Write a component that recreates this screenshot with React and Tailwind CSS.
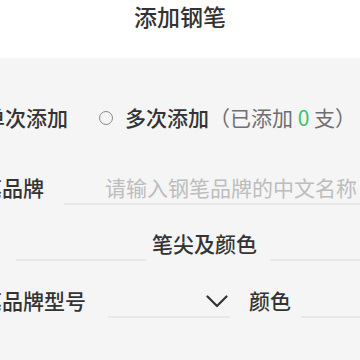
const font = { fontFamily: '"Noto Sans CJK SC", "Noto Sans", sans-serif' };

export default function App() {
  return (
    <div className="w-[360px] h-[360px] overflow-hidden bg-[#f5f5f5] text-[#333]" style={font}>
      {/* Header */}
      <div className="h-[58px] bg-white flex justify-center">
        <span className="text-[23px] leading-[33px] font-medium text-[#333]">添加钢笔</span>
      </div>

      {/* Add mode */}
      <div className="mt-[40px] h-[40px] flex items-center ml-[-16px] whitespace-nowrap text-[21px]">
        <span className="font-medium">单次添加</span>
        <span className="ml-[31px] w-[14px] h-[14px] rounded-full border-[1.5px] border-[#8a8a8a] shrink-0" />
        <span className="ml-[12px] font-medium">多次添加</span>
        <span className="text-[#6f6f6f]">（已添加 <span className="text-[#3cc36a]">0</span> 支）</span>
      </div>

      {/* Brand */}
      <div className="mt-[33px] flex items-start ml-[-40px] whitespace-nowrap text-[21px]">
        <span className="h-[34px] leading-[32px] font-medium">钢笔品牌</span>
        <div className="ml-[20px] flex-1 h-[34px] border-b-2 border-[#e8e8e8] pl-[41px] leading-[32px] text-[#bdbdbd] overflow-hidden">
          请输入钢笔品牌的中文名称
        </div>
      </div>

      {/* Nib & colour */}
      <div className="mt-[22px] flex items-start whitespace-nowrap text-[21px]">
        <div className="ml-[16px] w-[130px] h-[34px] border-b-2 border-[#e8e8e8]" />
        <span className="ml-[6px] h-[34px] leading-[32px] font-medium">笔尖及颜色</span>
        <div className="ml-[13px] flex-1 h-[34px] border-b-2 border-[#e8e8e8]" />
      </div>

      {/* Model & colour */}
      <div className="mt-[23px] flex items-start ml-[-40px] whitespace-nowrap text-[21px]">
        <span className="h-[34px] leading-[32px] font-medium">钢笔品牌型号</span>
        <div className="ml-[22px] w-[122px] h-[34px] border-b-2 border-[#e8e8e8] flex items-center justify-end pr-[2px] pt-[2px]">
          <svg width="22" height="13" viewBox="0 0 22 13" fill="none">
            <path d="M1.5 1.5 L11 11 L20.5 1.5" stroke="#333" strokeWidth="2.2" strokeLinecap="round" strokeLinejoin="round" />
          </svg>
        </div>
        <span className="ml-[19px] h-[34px] leading-[32px] font-medium">颜色</span>
        <div className="ml-[10px] flex-1 h-[34px] border-b-2 border-[#e8e8e8]" />
      </div>
    </div>
  );
}
